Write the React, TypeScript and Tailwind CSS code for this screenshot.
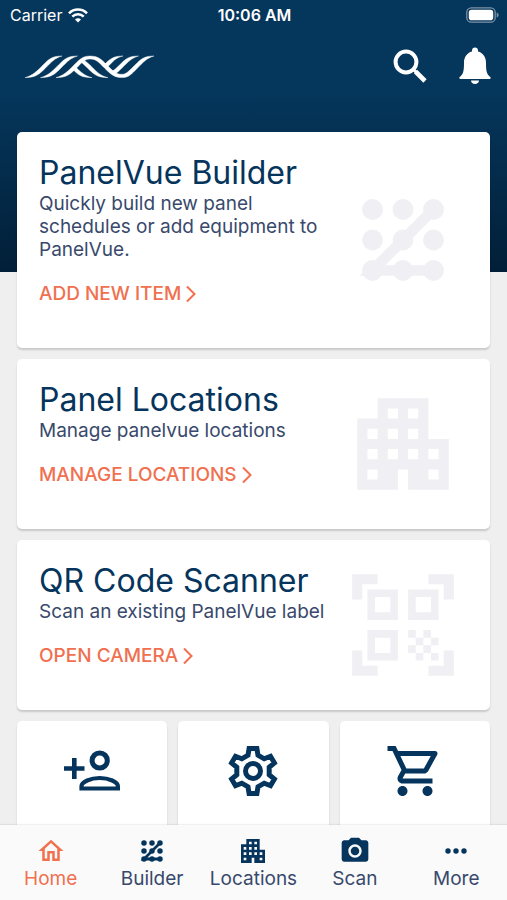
import React from 'react';
import {
  MdApartment,
  MdOutlineHome,
  MdOutlineShoppingCart,
  MdPhotoCamera,
  MdQrCodeScanner,
} from 'react-icons/md';

type IconProps = { className?: string };

const Logo: React.FC<IconProps> = ({ className }) => (
  <svg
    className={className}
    viewBox="0 0 130 25"
    fill="currentColor"
    stroke="currentColor"
    strokeWidth={0.4}
    aria-hidden="true"
  >
    <path d="M0 23.600C8 21.500 12 17 18 11C24 5 27 2 37 2C30 4 26.500 8 20.500 14C14.500 20 11 23.600 0 23.600Z" />
    <path d="M15.500 23.600C23.500 21.500 27.500 17 33.500 11C39.500 5 42.500 2 52.500 2C45.500 4 42 8 36 14C30 20 26.500 23.600 15.500 23.600Z" />
    {/* アーチから右端までの線 */}
    <path d="M31 23.600C39 21.500 43 17 49 11C55 5 58 2 65 2C73 2 76 5 82 11C88 17 91 20.300 97 20.300C101 20.300 104 17 110 11C116 5 119 2 129 2C122 4 118.500 8 112.500 14C106.500 20 104 23.600 97 23.600C89 23.600 85.500 20 79.500 14C73.500 8 71 5 65 5C60 5 57.500 8 51.500 14C45.500 20 42 23.600 31 23.600Z" />
    <path d="M83 23.600C72 23.600 68.500 20 62.500 14L55 7L58 5L65 11C71 17 75 22 83 23.600Z" />
    <path d="M67 23.600C56 23.600 53 20.500 49 16.500L47 14.500L49.500 12C55 17 59 22 67 23.600Z" />
    <path d="M98 2C88 2 85 5 79.500 10.500L82 13.500L87.500 8C90 5.500 92 3.500 98 2Z" />
    <path d="M113.500 2C103.500 2 100.500 5 94.500 11C91 14.500 89 16.500 86 17.500L89 20.500C92 19 94.500 16.500 97 14C103 8 106.500 4 113.500 2Z" />
  </svg>
);

const SearchIcon: React.FC<IconProps> = ({ className }) => (
  <svg className={className} viewBox="0 0 36 36" fill="none" stroke="currentColor" aria-hidden="true">
    <circle cx="14" cy="14" r="10.4" strokeWidth="4" />
    <path d="M21 21l3 3" strokeWidth="3" />
    <path d="M23.500 23.500L33 33" strokeWidth="4.600" />
  </svg>
);

const BellIcon: React.FC<IconProps> = ({ className }) => (
  <svg className={className} viewBox="0 0 32 38" fill="currentColor" aria-hidden="true">
    <path d="M16 .5c-1.800 0-3 1.300-3 3v.9C8 5.700 5 10 5 15.500c0 9-.7 11.500-4.300 14.500-.7.700-.4 2 .7 2h29.200c1.100 0 1.400-1.300.7-2C27.700 27 27 24.500 27 15.500c0-5.500-3-9.800-8-11.100v-.9c0-1.700-1.200-3-3-3z" />
    <path d="M12 33.500h8c0 2-1.800 3.500-4 3.500s-4-1.500-4-3.500z" />
  </svg>
);

const WifiIcon: React.FC<IconProps> = ({ className }) => (
  <svg className={className} viewBox="0 0 20 15" fill="none" stroke="currentColor" strokeWidth={2.6} aria-hidden="true">
    <path d="M1 5.300a12.700 12.700 0 0 1 18 0" />
    <path d="M4.300 8.700a8 8 0 0 1 11.400 0" />
    <path d="M10 14.600l-3-3.100a4.200 4.200 0 0 1 6 0z" fill="currentColor" stroke="none" />
  </svg>
);

const BatteryIcon: React.FC<IconProps> = ({ className }) => (
  <svg className={className} viewBox="0 0 33 16" aria-hidden="true">
    <rect x=".8" y=".8" width="28.400" height="14.400" rx="4.500" fill="none" stroke="#7f92a8" strokeWidth="1.300" />
    <rect x="2.800" y="2.800" width="24.400" height="10.400" rx="2.800" fill="#fff" />
    <path d="M30.700 5.500c1.300.5 1.900 1.400 1.900 2.500s-.6 2-1.900 2.500z" fill="#7f92a8" />
  </svg>
);

const ChevronIcon: React.FC<IconProps> = ({ className }) => (
  <svg className={className} viewBox="0 0 12 18" fill="none" stroke="currentColor" strokeWidth={2} aria-hidden="true">
    <path d="M2 1.500L9.500 9L2 16.500" />
  </svg>
);

const PatternIcon: React.FC<IconProps> = ({ className }) => (
  <svg className={className} viewBox="0 0 24 24" fill="currentColor" aria-hidden="true">
    {[6, 12, 18].map((y) => [6, 12, 18].map((x) => <circle key={`${x}-${y}`} cx={x} cy={y} r="2.050" />))}
    <path d="M18 6L6 18H18" fill="none" stroke="currentColor" strokeWidth="2.100" />
  </svg>
);

const AddUserIcon: React.FC<IconProps> = ({ className }) => (
  <svg className={className} viewBox="0 0 56 42" fill="none" stroke="currentColor" aria-hidden="true">
    <path d="M0 18.500h20.500M10.300 8v21" strokeWidth="4.600" />
    <circle cx="35.700" cy="10.500" r="7.600" strokeWidth="5" />
    <path d="M17.500 38.500v-2.300c0-4.200 9-8.200 18.200-8.200s18.200 4 18.200 8.200v2.300z" strokeWidth="4.200" />
  </svg>
);

const GearIcon: React.FC<IconProps> = ({ className }) => (
  <svg className={className} viewBox="-25 -25 50 50" fill="none" stroke="currentColor" aria-hidden="true">
    <path
      strokeWidth="5"
      strokeLinejoin="miter"
      d="M-3.900-22.500L3.900-22.500L5-15.800L11.200-12.200L17.500-14.700L21.400-8L16.200-3.800L16.200 3.800L21.400 8L17.500 14.700L11.200 12.200L5 15.800L3.900 22.500L-3.900 22.500L-5 15.800L-11.200 12.200L-17.500 14.700L-21.400 8L-16.200 3.800L-16.200-3.800L-21.400-8L-17.500-14.700L-11.200-12.200L-5-15.800Z"
    />
    <circle r="7.500" strokeWidth="5" />
  </svg>
);

const DotsIcon: React.FC<IconProps> = ({ className }) => (
  <svg className={className} viewBox="0 0 26 26" fill="currentColor" aria-hidden="true">
    <circle cx="5" cy="13" r="2.700" />
    <circle cx="13" cy="13" r="2.700" />
    <circle cx="21" cy="13" r="2.700" />
  </svg>
);

interface FeatureCard {
  title: string;
  text: string;
  action: string;
  icon: React.ComponentType<IconProps>;
}

const features: FeatureCard[] = [
  {
    title: 'PanelVue Builder',
    text: 'Quickly build new panel schedules or add equipment to PanelVue.',
    action: 'ADD NEW ITEM',
    icon: PatternIcon,
  },
  {
    title: 'Panel Locations',
    text: 'Manage panelvue locations',
    action: 'MANAGE LOCATIONS',
    icon: MdApartment,
  },
  {
    title: 'QR Code Scanner',
    text: 'Scan an existing PanelVue label',
    action: 'OPEN CAMERA',
    icon: MdQrCodeScanner,
  },
];

const shortcuts = [
  { label: 'Add user', icon: AddUserIcon, iconClass: 'h-[42px] w-[56px]' },
  { label: 'Settings', icon: GearIcon, iconClass: 'size-[50px]' },
  { label: 'Cart', icon: MdOutlineShoppingCart, iconClass: 'size-[60px]' },
];

const tabs = [
  { label: 'Home', icon: MdOutlineHome, iconClass: 'size-[30px]' },
  { label: 'Builder', icon: PatternIcon, iconClass: 'size-[32px]' },
  { label: 'Locations', icon: MdApartment, iconClass: 'size-[32px]' },
  { label: 'Scan', icon: MdPhotoCamera, iconClass: 'size-[32px]' },
  { label: 'More', icon: DotsIcon, iconClass: 'size-[26px]' },
];

const Feature: React.FC<{ item: FeatureCard }> = ({ item }) => {
  const Icon = item.icon;
  return (
    <section className="flex items-center justify-between rounded-[5px] bg-white pr-[26px] pl-[22px] shadow-[0_2px_2px_rgba(0,0,0,0.16)]">
      <div className="max-w-[290px] pt-[22px] pb-[42px]">
        <h2 className="text-[32px] leading-[38px] font-normal text-[#05345c]">{item.title}</h2>
        <p className="text-[19px] leading-[23px] text-[#38496c]">{item.text}</p>
        <button
          type="button"
          className="mt-[21px] flex items-center gap-1 text-[19px] leading-[24px] font-medium text-[#f0704f]"
        >
          {item.action}
          <ChevronIcon className="h-[18px] w-[12px]" />
        </button>
      </div>
      <Icon className="size-[122px] shrink-0 text-[#f0f0f4]" />
    </section>
  );
};

const App: React.FC = () => {
  return (
    <div className="flex h-screen flex-col overflow-hidden bg-[#efefef] font-['Inter','Liberation_Sans',sans-serif]">
      {/* ヘッダーとカード一覧 */}
      <div className="min-h-0 flex-1 overflow-hidden">
        <header className="h-[272px] bg-linear-to-b from-[#05365b] from-35% to-[#021f38] text-white">
          <div className="flex items-center px-2 pt-[5px] text-[16px] leading-[20px]">
            <div className="flex flex-1 items-center gap-[6px] pl-[2px]">
              Carrier
              <WifiIcon className="h-[15px] w-[20px]" />
            </div>
            <div className="font-semibold">10:06 AM</div>
            <div className="flex flex-1 justify-end">
              <BatteryIcon className="h-[16px] w-[33px]" />
            </div>
          </div>
          <div className="flex items-center justify-between pt-[22px] pr-4 pl-[25px]">
            <Logo className="h-[25px] w-[130px]" />
            <div className="flex items-center gap-[31px]">
              <button type="button" aria-label="Search">
                <SearchIcon className="size-[36px]" />
              </button>
              <button type="button" aria-label="Notifications">
                <BellIcon className="h-[38px] w-[32px]" />
              </button>
            </div>
          </div>
        </header>

        <main className="relative -mt-[140px] flex flex-col gap-[11px] px-[17px]">
          {features.map((item) => (
            <Feature key={item.title} item={item} />
          ))}
          <div className="grid grid-cols-3 gap-[11px]">
            {shortcuts.map(({ label, icon: Icon, iconClass }) => (
              <button
                key={label}
                type="button"
                aria-label={label}
                className="flex h-[150px] items-start justify-center rounded-[5px] bg-white pt-5 text-[#05345c] shadow-[0_2px_2px_rgba(0,0,0,0.16)]"
              >
                <span className="flex h-[60px] items-center">
                  <Icon className={iconClass} />
                </span>
              </button>
            ))}
          </div>
        </main>
      </div>

      {/* 下部タブ */}
      <nav className="relative grid shrink-0 grid-cols-5 bg-[#fafafa] pt-[10px] pb-[9px] shadow-[0_-1px_1px_rgba(0,0,0,0.06)]">
        {tabs.map(({ label, icon: Icon, iconClass }) => (
          <a
            key={label}
            href="#"
            className={`flex flex-col items-center text-[19px] leading-[24px] ${
              label === 'Home' ? 'text-[#f0704f]' : 'text-[#38496c]'
            }`}
          >
            <span className={`flex h-[32px] items-center ${label === 'Home' ? '' : 'text-[#05345c]'}`}>
              <Icon className={iconClass} />
            </span>
            {label}
          </a>
        ))}
      </nav>
    </div>
  );
};

export default App;
